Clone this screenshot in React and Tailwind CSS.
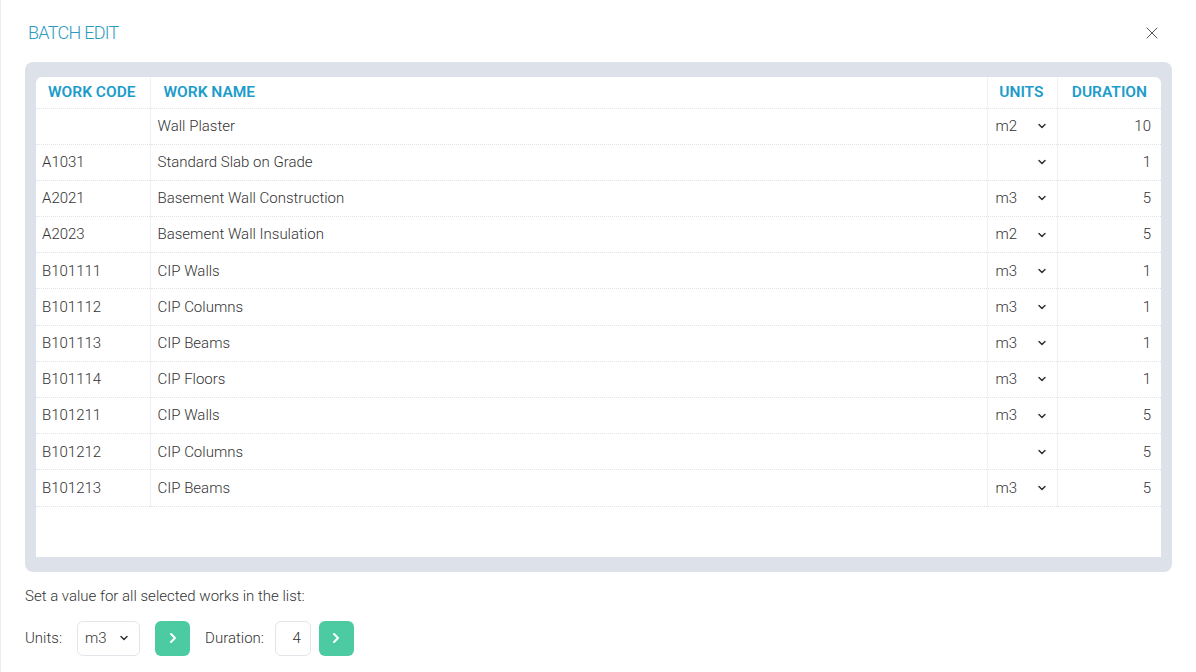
import { X, ChevronRight, ChevronDown } from "lucide-react";

const rows = [
  { code: "", name: "Wall Plaster", unit: "m2", duration: 10 },
  { code: "A1031", name: "Standard Slab on Grade", unit: "", duration: 1 },
  { code: "A2021", name: "Basement Wall Construction", unit: "m3", duration: 5 },
  { code: "A2023", name: "Basement Wall Insulation", unit: "m2", duration: 5 },
  { code: "B101111", name: "CIP Walls", unit: "m3", duration: 1 },
  { code: "B101112", name: "CIP Columns", unit: "m3", duration: 1 },
  { code: "B101113", name: "CIP Beams", unit: "m3", duration: 1 },
  { code: "B101114", name: "CIP Floors", unit: "m3", duration: 1 },
  { code: "B101211", name: "CIP Walls", unit: "m3", duration: 5 },
  { code: "B101212", name: "CIP Columns", unit: "", duration: 5 },
  { code: "B101213", name: "CIP Beams", unit: "m3", duration: 5 },
];

function Caret() {
  return <ChevronDown className="h-3 w-3 text-[#333]" strokeWidth={3} />;
}

export default function App() {
  return (
    <div
      className="h-[672px] w-[1196px] overflow-hidden bg-white text-[#333] border-l border-[#eceef1]"
      style={{ fontFamily: "Roboto, 'Liberation Sans', sans-serif" }}
    >
      <div className="flex items-center justify-between pl-[27px] pr-[34px] pt-[19px]">
        <h2 className="text-[18px] font-light tracking-[-0.04em] text-[#2b9bbf]">BATCH EDIT</h2>
        <X className="h-[20px] w-[20px] text-[#444]" strokeWidth={1.1} />
      </div>

      <div className="mx-[24px] mt-[16px] rounded-lg bg-[#dde1ea] px-[11px] pt-[15px] pb-[15px]">
        <div className="h-[480px] rounded-t-md bg-white">
          <table className="w-full border-collapse text-[15px] font-light">
            <thead>
              <tr className="h-[31px] border-b border-dotted border-[#e3e5ea] text-[15.5px] font-semibold text-[#1d9ccb]">
                <th className="w-[114px] border-r border-[#eef0f3] px-3 text-left font-semibold">WORK CODE</th>
                <th className="border-r border-[#eef0f3] px-[13px] text-left font-semibold">WORK NAME</th>
                <th className="w-[70px] border-r border-[#eef0f3] pr-[13px] text-right font-semibold">UNITS</th>
                <th className="w-[104px] pr-[14px] text-right font-semibold">DURATION</th>
              </tr>
            </thead>
            <tbody>
              {rows.map((r, i) => (
                <tr key={i} className="h-[36.2px] border-b border-dotted border-[#dfe2e7]">
                  <td className="border-r border-[#eef0f3] px-[6px]">{r.code}</td>
                  <td className="border-r border-[#eef0f3] px-[7px]">{r.name}</td>
                  <td className="border-r border-[#eef0f3] pl-[8px] pr-[9px]">
                    <div className="flex items-center justify-between">
                      <span>{r.unit}</span>
                      <Caret />
                    </div>
                  </td>
                  <td className="pr-[10px] text-right">{r.duration}</td>
                </tr>
              ))}
            </tbody>
          </table>
        </div>
      </div>

      <p className="ml-[24px] mt-[13px] text-[15px] font-light">Set a value for all selected works in the list:</p>

      <div className="ml-[24px] mt-[13px] flex items-center text-[15px] font-light">
        <span>Units:</span>
        <div className="ml-[15px] flex h-[35px] w-[63px] items-center justify-between rounded-md border border-[#e3e5ea] pl-[7px] pr-[9px]">
          <span>m3</span>
          <Caret />
        </div>
        <button className="ml-[15px] flex h-[35px] w-[35px] items-center justify-center rounded-md bg-[#4ccba3]">
          <ChevronRight className="h-4 w-4 text-white" strokeWidth={3} />
        </button>
        <span className="ml-[15px]">Duration:</span>
        <div className="ml-[11px] flex h-[35px] w-[36px] items-center justify-end rounded-md border border-[#e3e5ea] pr-[9px]">
          4
        </div>
        <button className="ml-[8px] flex h-[35px] w-[35px] items-center justify-center rounded-md bg-[#4ccba3]">
          <ChevronRight className="h-4 w-4 text-white" strokeWidth={3} />
        </button>
      </div>
    </div>
  );
}
